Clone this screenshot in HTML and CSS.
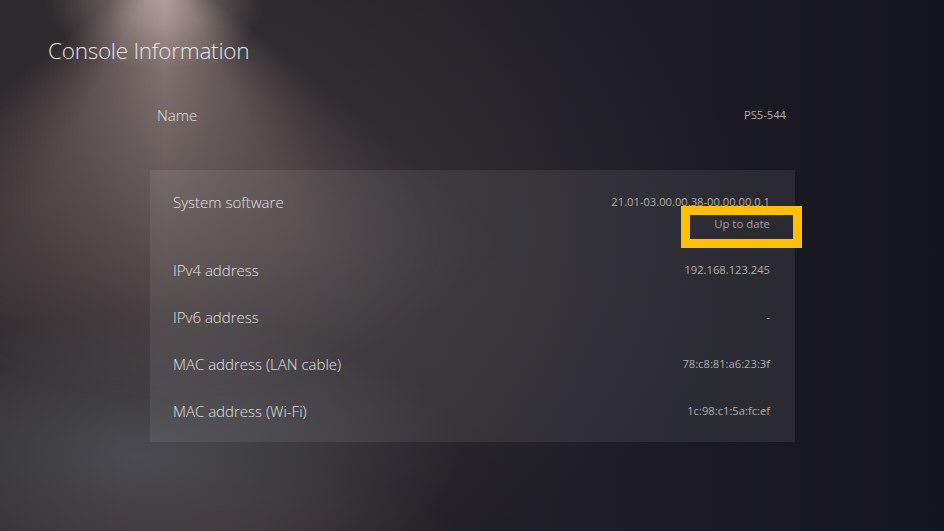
FILE: index.html
```html
<!DOCTYPE html>
<html lang="en">
<head>
<meta charset="utf-8">
<title>Console Information</title>
<link rel="stylesheet" href="styles.css">
</head>
<body>
<div class="screen">
  <h1 class="title">Console Information</h1>
  <div class="content">
    <div class="name-row">
      <span class="label">Name</span>
      <span class="value">PS5-544</span>
    </div>
    <div class="panel">
      <div class="row row-system">
        <span class="label">System software</span>
        <div class="value-col">
          <span class="value">21.01-03.00.00.38-00.00.00.0.1</span>
          <span class="status">Up to date</span>
        </div>
      </div>
      <div class="row">
        <span class="label">IPv4 address</span>
        <span class="value">192.168.123.245</span>
      </div>
      <div class="row">
        <span class="label">IPv6 address</span>
        <span class="value">-</span>
      </div>
      <div class="row">
        <span class="label">MAC address (LAN cable)</span>
        <span class="value">78:c8:81:a6:23:3f</span>
      </div>
      <div class="row">
        <span class="label">MAC address (Wi-Fi)</span>
        <span class="value">1c:98:c1:5a:fc:ef</span>
      </div>
    </div>
  </div>
</div>
</body>
</html>
```
FILE: styles.css
```css
html, body {
  margin: 0;
  padding: 0;
}
body {
  width: 944px;
  height: 531px;
  overflow: hidden;
  font-family: "Open Sans", "Noto Sans", sans-serif;
  background: #1c1b23;
}
.screen {
  position: relative;
  width: 944px;
  height: 531px;
  box-sizing: border-box;
  padding-top: 35px;
  background:
    radial-gradient(ellipse 320px 140px at 140px 455px, rgba(98,103,110,0.55), rgba(98,103,110,0) 100%),
    radial-gradient(ellipse 260px 90px at 200px 545px, rgba(95,68,68,0.4), rgba(95,68,68,0) 100%),
    radial-gradient(ellipse 420px 320px at 330px 230px, rgba(110,96,96,0.22), rgba(110,96,96,0) 100%),
    linear-gradient(to right, #2d292c 0%, #29262a 30%, #1e1d25 62%, #15151e 100%);
}
.screen::before {
  content: "";
  position: absolute;
  inset: 0;
  pointer-events: none;
  background:
    radial-gradient(ellipse 110px 70px at 155px 0px, rgba(205,185,178,0.6), rgba(205,185,178,0) 100%),
    conic-gradient(from 128deg at 165px -40px,
      rgba(170,148,142,0) 0deg,
      rgba(170,148,142,0.5) 25deg,
      rgba(188,165,158,0.65) 52deg,
      rgba(170,148,142,0.5) 80deg,
      rgba(170,148,142,0) 104deg,
      rgba(170,148,142,0) 360deg);
  -webkit-mask-image: radial-gradient(ellipse 460px 440px at 165px -40px, #000 15%, rgba(0,0,0,0) 100%);
  mask-image: radial-gradient(ellipse 460px 440px at 165px -40px, #000 15%, rgba(0,0,0,0) 100%);
}
.title, .content {
  position: relative;
}
.title {
  margin: 0 0 0 48px;
  font-size: 22.5px;
  line-height: 32px;
  font-weight: 300;
  color: #e6e4e4;
  letter-spacing: -0.25px;
}
.content {
  margin-left: 150px;
  width: 645px;
}
.name-row {
  margin: 28px 9px 0 7px;
  height: 40px;
  display: flex;
  justify-content: space-between;
  align-items: center;
}
.label {
  font-size: 15px;
  line-height: 20px;
  color: #e2e0e0;
  font-weight: 300;
}
.value {
  font-size: 11.2px;
  line-height: 20px;
  color: #aeadb0;
}
.panel {
  margin-top: 35px;
  padding: 8px 25px 8px 23px;
  background: rgba(255,255,255,0.075);
}
.row {
  height: 47px;
  display: flex;
  justify-content: space-between;
  align-items: center;
}
.row-system {
  height: 68px;
  box-sizing: border-box;
  padding-top: 14px;
  align-items: flex-start;
}
.value-col {
  display: flex;
  flex-direction: column;
  align-items: flex-end;
}
.status {
  position: relative;
  margin-top: 4px;
  font-size: 11.4px;
  line-height: 16px;
  color: #a09fa4;
}
.status::after {
  content: "";
  position: absolute;
  left: -33px;
  right: -32px;
  top: -10px;
  bottom: -16px;
  border: 9px solid #ffc000;
}
```
